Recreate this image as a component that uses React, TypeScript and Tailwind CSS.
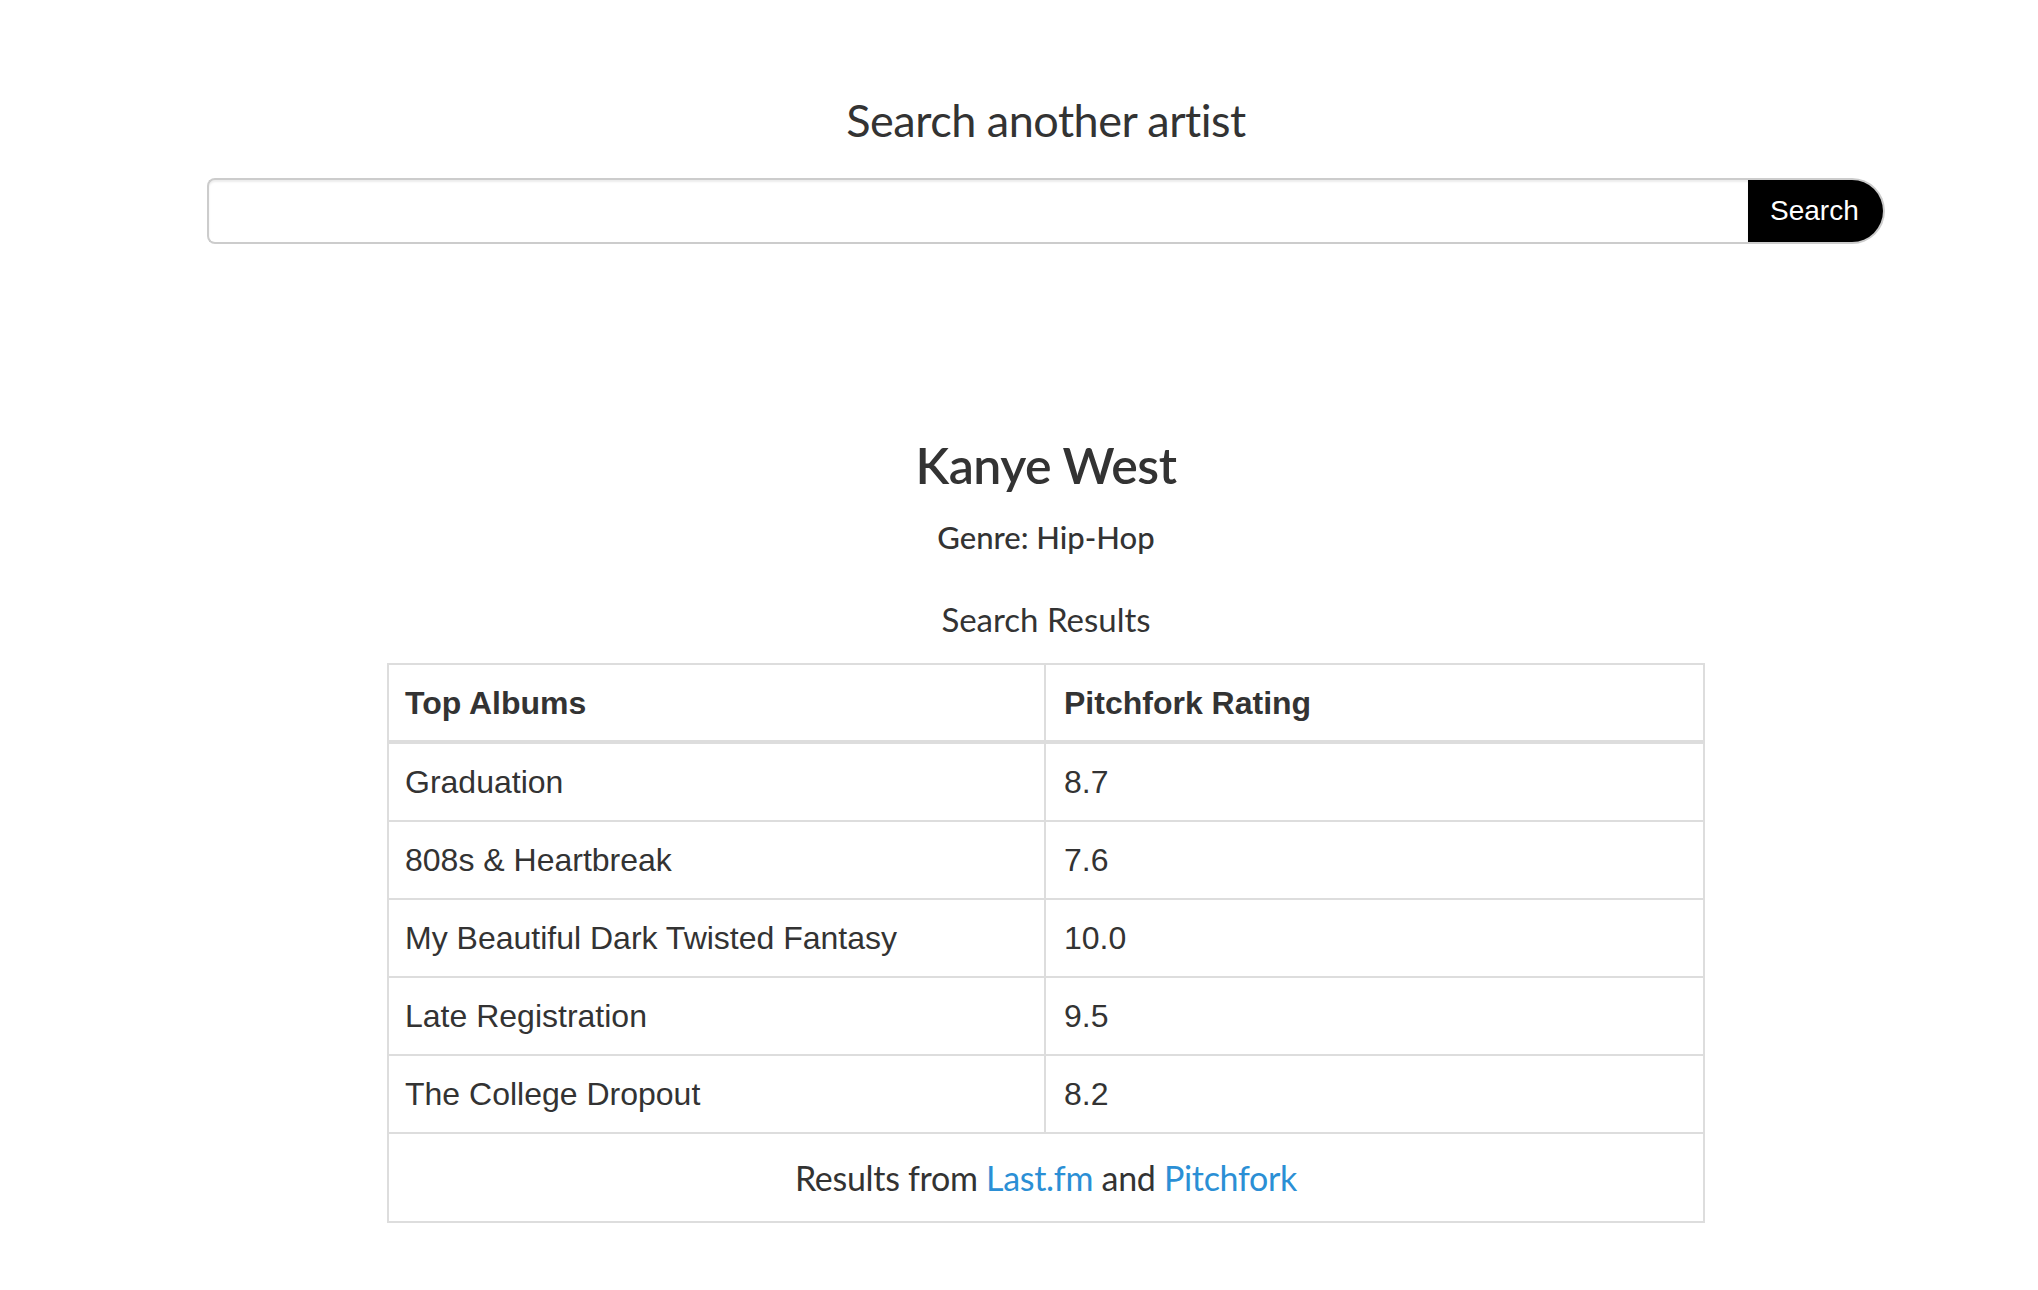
import React from "react";

const albums = [
  { title: "Graduation", rating: "8.7" },
  { title: "808s & Heartbreak", rating: "7.6" },
  { title: "My Beautiful Dark Twisted Fantasy", rating: "10.0" },
  { title: "Late Registration", rating: "9.5" },
  { title: "The College Dropout", rating: "8.2" },
];

const App: React.FC = () => {
  return (
    <div className="min-h-[1290px] w-full bg-white pl-[54px] flex justify-center text-[#333]">
      <div className="w-[1678px] flex flex-col items-center pt-[98px] font-['Lato',sans-serif]">
        <h2 className="text-[45px] leading-[45px] font-normal tracking-[-0.5px]">Search another artist</h2>

        <form className="mt-[35px] w-full flex h-[66px]" onSubmit={(e) => e.preventDefault()}>
          <input
            type="text"
            className="flex-1 h-full border-2 border-r-0 border-[#ccc] rounded-l-[8px] shadow-[inset_0_2px_2px_rgba(0,0,0,0.075)] px-4 outline-none"
          />
          <button
            type="submit"
            className="w-[137px] h-full bg-black text-white border-2 border-l-0 border-[#ccc] rounded-r-full pl-[22px] pr-[24px] text-[28px] font-['Liberation_Sans',Arial,sans-serif] text-left"
          >
            Search
          </button>
        </form>

        <h1 className="mt-[196px] text-[50px] leading-[50px] font-semibold tracking-[-0.5px]">Kanye West</h1>
        <p className="mt-[32px] text-[31px] leading-[31px] font-medium">Genre: Hip-Hop</p>
        <p className="mt-[50px] text-[33px] leading-[33px]">Search Results</p>

        <div className="mt-[27px] w-[1318px] border-2 border-[#ddd] font-['Liberation_Sans',Arial,sans-serif] text-[32px]">
          <div className="grid grid-cols-2 h-[79px] border-b-4 border-[#ddd] font-bold">
            <div className="flex items-center pl-[16px] border-r-2 border-[#ddd]">Top Albums</div>
            <div className="flex items-center pl-[18px]">Pitchfork Rating</div>
          </div>
          {albums.map((album) => (
            <div key={album.title} className="grid grid-cols-2 h-[78px] border-b-2 border-[#ddd]">
              <div className="flex items-center pl-[16px] border-r-2 border-[#ddd]">{album.title}</div>
              <div className="flex items-center pl-[18px]">{album.rating}</div>
            </div>
          ))}
          <div className="h-[87px] flex items-center justify-center font-['Lato',sans-serif] text-[34px] tracking-[-0.3px]">
            <span>
              Results from <a className="text-[#2b8fd5]" href="#">Last.fm</a> and{" "}
              <a className="text-[#2b8fd5]" href="#">Pitchfork</a>
            </span>
          </div>
        </div>
      </div>
    </div>
  );
};

export default App;
